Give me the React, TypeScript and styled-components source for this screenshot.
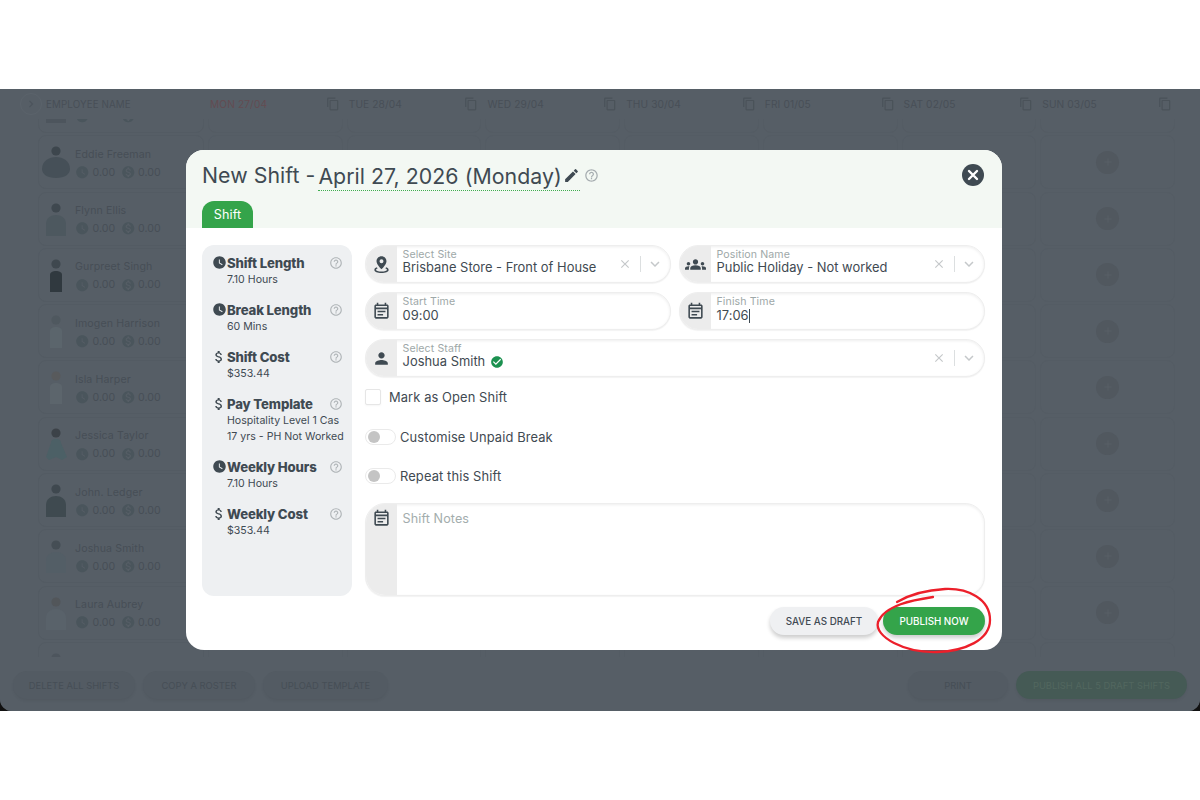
import React from "react";
import styled, { createGlobalStyle } from "styled-components";
import {
  MdWatchLater, MdAttachMoney, MdHelpOutline, MdGroups, MdOutlineEventNote, MdPerson,
  MdEdit, MdCheckCircle, MdContentCopy, MdClose, MdKeyboardArrowDown, MdKeyboardArrowRight,
  MdAdd, MdMonetizationOn,
} from "react-icons/md";

const Global = createGlobalStyle`
  html, body { margin: 0; padding: 0; background: #fff; }
  body { font-family: Inter, "Noto Sans", "Liberation Sans", sans-serif; }
  * { box-sizing: border-box; }
`;

const Page = styled.div`
  width: 1200px; height: 800px; padding: 89px 0; background: #fff; overflow: hidden;
`;
const Frame = styled.div`
  height: 622px; background: #111;
`;
const Screen = styled.div`
  position: relative; height: 100%; background: #565e66; border-radius: 0 0 12px 12px;
  display: flex; flex-direction: column; overflow: hidden; color: #474f57;
`;
const HeadRow = styled.div`
  height: 30px; flex: none; padding-left: 38px; padding-right: 25px;
  display: grid; grid-template-columns: 166px repeat(7, 1fr); column-gap: 4px; align-items: center;
  position: relative; z-index: 1; background: #565e66;
`;
const ChevronCircle = styled.span`
  position: absolute; left: 20px; top: 4px; width: 22px; height: 22px; border-radius: 50%;
  border: 1px solid #5b636b; display: flex; align-items: center; justify-content: center; color: #4c545c; font-size: 14px;
`;
const HeadCell = styled.div<{ $red?: boolean; $first?: boolean }>`
  display: flex; justify-content: space-between; align-items: center;
  padding: 0 3px 0 ${p => (p.$first ? "8px" : "2px")};
  font-size: ${p => (p.$first ? "9.8px" : "10.2px")}; letter-spacing: .1px; color: ${p => (p.$red ? "#634c52" : "#484f57")};
  svg { font-size: 14px; color: #4a5259; }
`;
const Scroll = styled.div`
  flex: 1; overflow: hidden; padding: 0 25px 0 38px;
`;
const Grid = styled.div`
  margin-top: -40px; display: grid; grid-template-columns: 166px repeat(7, 1fr);
  grid-auto-rows: 54px; gap: 2.3px 4px;
`;
const EmpCard = styled.div`
  border: 1px solid #535b63; border-radius: 8px; display: flex; align-items: center; padding-left: 2px; gap: 3px;
`;
const DayCard = styled.div`
  border: 1px solid #545c64; border-radius: 8px; display: flex; align-items: center; justify-content: center;
`;
const PlusDot = styled.span`
  width: 23px; height: 23px; border-radius: 50%; background: #51585f; color: #585f67;
  display: flex; align-items: center; justify-content: center; font-size: 12px;
`;
const Avatar = styled.svg`
  width: 30px; height: 38px; flex: none;
`;
const EmpText = styled.div`
  display: flex; flex-direction: column; gap: 5px; margin: 2px 0 0 1px;
`;
const EmpName = styled.div`
  height: 13px; font-size: 10.6px; line-height: 13px; color: #474e56; letter-spacing: .12px; white-space: nowrap;
`;
const Stats = styled.div`
  display: flex; align-items: center; height: 13px; font-size: 10.6px; line-height: 13px; color: #474e56;
  svg { font-size: 14.5px; color: #4a555c; margin-right: 3px; flex: none; }
  span { width: 28px; }
`;
const Footer = styled.div`
  height: 54px; flex: none; background: #565e66; position: relative; z-index: 1;
  display: flex; align-items: flex-start; padding: 14px 13px 0 13px; gap: 8px;
`;
const FootBtn = styled.div<{ $w: number; $green?: boolean; $push?: boolean }>`
  width: ${p => p.$w}px; height: 28px; border-radius: 14px; display: flex; align-items: center; justify-content: center;
  font-size: 9.4px; white-space: nowrap;
  background: ${p => (p.$green ? "#455a55" : "#535b63")};
  color: ${p => (p.$green ? "#52675f" : "#464e56")};
  box-shadow: 0 2px 3px rgba(0,0,0,.05);
  margin-left: ${p => (p.$push ? "auto" : "0")};
`;

const Modal = styled.div`
  position: absolute; left: 186px; top: 61px; width: 816px; height: 500px;
  background: #fff; border-radius: 18px; overflow: hidden; display: flex; flex-direction: column;
`;
const ModalHead = styled.div`
  height: 78px; flex: none; background: #f3f8f3; padding: 10px 16px 0; position: relative;
  display: flex; flex-direction: column; justify-content: space-between;
`;
const TitleRow = styled.div`
  display: flex; align-items: center; height: 29px; color: #3f4a52; font-size: 21.3px; letter-spacing: .05px; white-space: nowrap;
`;
const TitleDate = styled.span`
  display: inline-flex; align-items: center; margin-left: 3px; height: 30px;
  border-bottom: 1px dotted #3fae4f; margin-top: 3px;
  svg { font-size: 17px; margin-left: 1px; }
`;
const TitleHelp = styled.span`
  display: inline-flex; color: #a6adb0; font-size: 15px; margin-left: 4px; margin-top: 2px;
`;
const CloseBtn = styled.span`
  position: absolute; right: 18px; top: 14px; width: 22px; height: 22px; border-radius: 50%; background: #3f4a52;
  display: flex; align-items: center; justify-content: center;
`;
const Tab = styled.div`
  width: 51px; height: 27px; background: #34a44a; color: #fff; border-radius: 12px 12px 0 0;
  display: flex; align-items: center; justify-content: center; font-size: 12.6px; letter-spacing: .1px;
`;
const Body = styled.div`
  flex: 1; padding: 17px 17px 0 16px; display: grid; grid-template-columns: 150px 1fr; column-gap: 13px; align-items: start; position: relative;
`;
const Side = styled.div`
  height: 351px; background: #eef0f2; border-radius: 12px; padding: 9px 0 0 10px; color: #3f4a52;
  display: flex; flex-direction: column; gap: 13.3px;
`;
const SideItem = styled.div`
  display: grid; grid-template-columns: 15px 1fr 23px; align-items: start;
`;
const SideIcon = styled.span<{ $dollar?: boolean }>`
  display: flex; font-size: ${p => (p.$dollar ? "16px" : "15px")}; margin: 1px 0 0 ${p => (p.$dollar ? "-1px" : "0")}; color: #3f4a52;
`;
const SideTitle = styled.div`
  font-size: 13.2px; line-height: 18px; height: 18px; font-weight: 800; letter-spacing: -.15px; color: #3f4a52; white-space: nowrap;
`;
const SideHelp = styled.span`
  display: flex; font-size: 14px; color: #b0b5b8; margin-top: 2px;
`;
const SideSub = styled.div`
  grid-column: 2 / 4; font-size: 10.6px; line-height: 15.7px; color: #3f4a52; white-space: nowrap;
`;
const Form = styled.div`
  display: flex; flex-direction: column;
`;
const FieldRow = styled.div`
  display: flex; gap: 8px; margin-bottom: 9px;
`;
const Field = styled.div<{ $tall?: boolean }>`
  flex: 1; min-width: 0; height: ${p => (p.$tall ? "93px" : "38px")}; border-radius: 20px; background: #fff;
  display: flex; overflow: hidden; border: 1px solid #eeeeee; box-shadow: inset 0 1px 3px rgba(0,0,0,.07), 0 1px 1px rgba(0,0,0,.05);
`;
const FieldIcon = styled.span<{ $top?: boolean; $big?: boolean }>`
  width: 31px; flex: none; background: #ececec; color: #3f4a52; font-size: ${p => (p.$big ? "21px" : "19px")};
  display: flex; justify-content: center; align-items: ${p => (p.$top ? "flex-start" : "center")};
  padding-top: ${p => (p.$top ? "5px" : "0")};
`;
const FieldText = styled.div`
  flex: 1; min-width: 0; padding: 3px 0 0 5.5px; display: flex; flex-direction: column;
`;
const FieldLabel = styled.div<{ $gap?: boolean }>`
  font-size: 10.6px; line-height: 12px; color: #9ea8a8; letter-spacing: .1px; margin-bottom: ${p => (p.$gap ? "1px" : "0")};
`;
const FieldValue = styled.div`
  font-size: 12.9px; line-height: 14px; color: #3f4a52; letter-spacing: .02px; display: flex; align-items: center; white-space: nowrap;
  svg { font-size: 14px; color: #1c9150; margin-left: 5px; }
`;
const Caret = styled.span`
  width: 1px; height: 14px; background: #3f4a52;
`;
const NotesHint = styled.div`
  font-size: 12.6px; line-height: 16px; margin-top: 4px; color: #a3adad; letter-spacing: .1px;
`;
const Controls = styled.div`
  display: flex; align-items: center; padding-right: 6px; color: #c5c8ca;
`;
const ClearX = styled.span`
  display: flex; font-size: 14px;
`;
const Divider = styled.span`
  width: 1px; height: 16px; background: #dcdfe0; margin: 0 5px 0 8px;
`;
const Chevron = styled.span`
  display: flex; font-size: 18px;
`;
const CheckLine = styled.div`
  display: flex; align-items: center; height: 16px; margin-top: 3px; gap: 8px; font-size: 12.9px; color: #3f4a52; letter-spacing: .1px;
`;
const Checkbox = styled.span`
  width: 16px; height: 16px; border: 1px solid #e6e6e6; border-radius: 2px; background: #fff; box-shadow: 0 1px 2px rgba(0,0,0,.04);
`;
const ToggleLine = styled.div<{ $gap: number }>`
  display: flex; align-items: center; height: 17px; margin-top: ${p => p.$gap}px; gap: 4px; font-size: 12.9px; color: #3f4a52; letter-spacing: .12px;
`;
const Toggle = styled.span`
  width: 31px; height: 16px; border-radius: 8px; background: #fff; border: 1px solid #eaeaea; padding: 2px; display: flex; align-items: center;
  &::before { content: ""; width: 12px; height: 12px; border-radius: 50%; background: #c4c4c4; }
`;
const NotesWrap = styled.div`
  margin-top: 18.5px; display: flex;
`;
const Actions = styled.div`
  position: absolute; right: 17px; top: 457px; display: flex; gap: 5px;
`;
const ActionBtn = styled.div<{ $primary?: boolean; $w: number }>`
  width: ${p => p.$w}px; height: 28px; border-radius: 14px; display: flex; align-items: center; justify-content: center;
  font-size: 9.8px; font-weight: 500; white-space: nowrap;
  background: ${p => (p.$primary ? "#34a44a" : "#eff0f2")};
  color: ${p => (p.$primary ? "#fff" : "#3f4a52")};
  box-shadow: 0 3px 4px rgba(0,0,0,.2);
`;
const Scribble = styled.svg`
  position: absolute; left: 875px; top: 496px; width: 118px; height: 70px; overflow: visible; pointer-events: none;
`;

const PinIcon = () => (
  <svg width="1em" height="1em" viewBox="0 0 24 24" fill="currentColor">
    <path fillRule="evenodd" d="M12 1.5c-3.6 0-6.3 2.8-6.3 6.3 0 4.3 6.3 10.2 6.3 10.2s6.3-5.9 6.3-10.2c0-3.5-2.7-6.3-6.3-6.3zm0 3.9a2.5 2.5 0 1 1 0 5 2.5 2.5 0 0 1 0-5z" />
    <path d="M6.2 15.6C4 16.3 3 17.5 3 18.8c0 2.3 4 3.9 9 3.9s9-1.6 9-3.9c0-1.3-1-2.5-3.2-3.2l-.9 1.6c1.3.4 2 1 2 1.6 0 1-2.8 2-6.9 2s-6.9-1-6.9-2c0-.6.7-1.2 2-1.6z" />
  </svg>
);

type Shape = "wide" | "bust" | "slim" | "arms";
type Person = { name?: string; head: string; body: string; shape: Shape; stats: boolean };

const bodies: Record<Shape, string> = {
  wide: "M1 26c0-8 7-12 14-12s14 4 14 12c0 5-5 9-14 9S1 31 1 26z",
  bust: "M5 36v-12c0-6 5-9 10-9s10 3 10 9v12z",
  slim: "M9 36V19c0-3 3-4 6-4s6 1 6 4v17z",
  arms: "M10 18c0-3 2-4 5-4s5 1 5 4l6 14-5 3-6-3-7 3-3-3z",
};

const Portrait = ({ head, body, shape }: Person) => (
  <Avatar viewBox="0 0 30 38">
    <path fill={body} d={bodies[shape]} />
    <circle cx="15" cy="8" r="4.6" fill={head} />
  </Avatar>
);

const people: Person[] = [
  { head: "#4d555d", body: "#4d555d", shape: "bust", stats: true },
  { name: "Eddie Freeman", head: "#3d464d", body: "#465058", shape: "wide", stats: true },
  { name: "Flynn Ellis", head: "#3f484f", body: "#4d585f", shape: "bust", stats: true },
  { name: "Gurpreet Singh", head: "#3f484f", body: "#30393f", shape: "slim", stats: true },
  { name: "Imogen Harrison", head: "#4f585f", body: "#5b656c", shape: "slim", stats: true },
  { name: "Isla Harper", head: "#585a5c", body: "#5c656c", shape: "slim", stats: true },
  { name: "Jessica Taylor", head: "#3c4248", body: "#4c6066", shape: "arms", stats: true },
  { name: "John. Ledger", head: "#3f484f", body: "#3f4a50", shape: "bust", stats: true },
  { name: "Joshua Smith", head: "#454e55", body: "#535e66", shape: "bust", stats: true },
  { name: "Laura Aubrey", head: "#52565a", body: "#59626a", shape: "bust", stats: true },
  { head: "#4d555d", body: "#4d555d", shape: "bust", stats: false },
];
const days = ["TUE 28/04", "WED 29/04", "THU 30/04", "FRI 01/05", "SAT 02/05", "SUN 03/05"];

const sideItems = [
  { icon: "clock", title: "Shift Length", sub: ["7.10 Hours"] },
  { icon: "clock", title: "Break Length", sub: ["60 Mins"] },
  { icon: "dollar", title: "Shift Cost", sub: ["$353.44"] },
  { icon: "dollar", title: "Pay Template", sub: ["Hospitality Level 1 Cas", "17 yrs - PH Not Worked"] },
  { icon: "clock", title: "Weekly Hours", sub: ["7.10 Hours"] },
  { icon: "dollar", title: "Weekly Cost", sub: ["$353.44"] },
];

const Clear = () => (
  <Controls>
    <ClearX><MdClose /></ClearX>
    <Divider />
    <Chevron><MdKeyboardArrowDown /></Chevron>
  </Controls>
);

export default function App() {
  return (
    <Page>
      <Global />
      <Frame>
        <Screen>
          <HeadRow>
            <ChevronCircle><MdKeyboardArrowRight /></ChevronCircle>
            <HeadCell $first>EMPLOYEE NAME</HeadCell>
            <HeadCell $red>MON 27/04<MdContentCopy /></HeadCell>
            {days.map(d => <HeadCell key={d}>{d}<MdContentCopy /></HeadCell>)}
          </HeadRow>
          <Scroll>
            <Grid>
              {people.map((person, i) => (
                <React.Fragment key={i}>
                  <EmpCard>
                    <Portrait {...person} />
                    <EmpText>
                      <EmpName>{person.name}</EmpName>
                      {person.stats && (
                        <Stats>
                          <MdWatchLater /><span>{person.name ? "0.00" : ""}</span>
                          <MdMonetizationOn /><span>{person.name ? "0.00" : ""}</span>
                        </Stats>
                      )}
                    </EmpText>
                  </EmpCard>
                  {Array.from({ length: 7 }).map((_, d) => (
                    <DayCard key={d}>{d === 6 && <PlusDot><MdAdd /></PlusDot>}</DayCard>
                  ))}
                </React.Fragment>
              ))}
            </Grid>
          </Scroll>
          <Footer>
            <FootBtn $w={122}>DELETE ALL SHIFTS</FootBtn>
            <FootBtn $w={112}>COPY A ROSTER</FootBtn>
            <FootBtn $w={125}>UPLOAD TEMPLATE</FootBtn>
            <FootBtn $w={100} $push>PRINT</FootBtn>
            <FootBtn $w={171} $green>PUBLISH ALL 5 DRAFT SHIFTS</FootBtn>
          </Footer>

          <Modal>
            <ModalHead>
              <TitleRow>
                New Shift -
                <TitleDate>April 27, 2026 (Monday)<MdEdit /></TitleDate>
                <TitleHelp><MdHelpOutline /></TitleHelp>
              </TitleRow>
              <CloseBtn>
                <svg width="12" height="12" viewBox="0 0 12 12">
                  <path d="M2 2l8 8M10 2l-8 8" stroke="#fff" strokeWidth="2.4" strokeLinecap="round" />
                </svg>
              </CloseBtn>
              <Tab>Shift</Tab>
            </ModalHead>
            <Body>
              <Side>
                {sideItems.map(it => (
                  <SideItem key={it.title}>
                    <SideIcon $dollar={it.icon === "dollar"}>
                      {it.icon === "clock" ? <MdWatchLater /> : <MdAttachMoney />}
                    </SideIcon>
                    <SideTitle>{it.title}</SideTitle>
                    <SideHelp><MdHelpOutline /></SideHelp>
                    {it.sub.map(s => <SideSub key={s}>{s}</SideSub>)}
                  </SideItem>
                ))}
              </Side>
              <Form>
                <FieldRow>
                  <Field>
                    <FieldIcon><PinIcon /></FieldIcon>
                    <FieldText>
                      <FieldLabel>Select Site</FieldLabel>
                      <FieldValue>Brisbane Store - Front of House</FieldValue>
                    </FieldText>
                    <Clear />
                  </Field>
                  <Field>
                    <FieldIcon $big><MdGroups /></FieldIcon>
                    <FieldText>
                      <FieldLabel>Position Name</FieldLabel>
                      <FieldValue>Public Holiday - Not worked</FieldValue>
                    </FieldText>
                    <Clear />
                  </Field>
                </FieldRow>
                <FieldRow>
                  <Field>
                    <FieldIcon><MdOutlineEventNote /></FieldIcon>
                    <FieldText>
                      <FieldLabel $gap>Start Time</FieldLabel>
                      <FieldValue>09:00</FieldValue>
                    </FieldText>
                  </Field>
                  <Field>
                    <FieldIcon><MdOutlineEventNote /></FieldIcon>
                    <FieldText>
                      <FieldLabel $gap>Finish Time</FieldLabel>
                      <FieldValue>17:06<Caret /></FieldValue>
                    </FieldText>
                  </Field>
                </FieldRow>
                <FieldRow>
                  <Field>
                    <FieldIcon><MdPerson /></FieldIcon>
                    <FieldText>
                      <FieldLabel>Select Staff</FieldLabel>
                      <FieldValue>Joshua Smith<MdCheckCircle /></FieldValue>
                    </FieldText>
                    <Clear />
                  </Field>
                </FieldRow>
                <CheckLine><Checkbox />Mark as Open Shift</CheckLine>
                <ToggleLine $gap={23.5}><Toggle />Customise Unpaid Break</ToggleLine>
                <ToggleLine $gap={22}><Toggle />Repeat this Shift</ToggleLine>
                <NotesWrap>
                  <Field $tall>
                    <FieldIcon $top><MdOutlineEventNote /></FieldIcon>
                    <FieldText>
                      <NotesHint>Shift Notes</NotesHint>
                    </FieldText>
                  </Field>
                </NotesWrap>
              </Form>
            </Body>
            <Actions>
              <ActionBtn $w={108}>SAVE AS DRAFT</ActionBtn>
              <ActionBtn $w={102} $primary>PUBLISH NOW</ActionBtn>
            </Actions>
          </Modal>
          <Scribble viewBox="0 0 118 70">
            <path fill="none" stroke="#ec1f2a" strokeWidth="2.3" strokeLinecap="round"
              d="M58 12C38 15 10 20 3 37C-1 52 30 68 62 67C90 66 115 55 115 35C115 14 93 3 70 4C52 5 34 10 22 17" />
          </Scribble>
        </Screen>
      </Frame>
    </Page>
  );
}
